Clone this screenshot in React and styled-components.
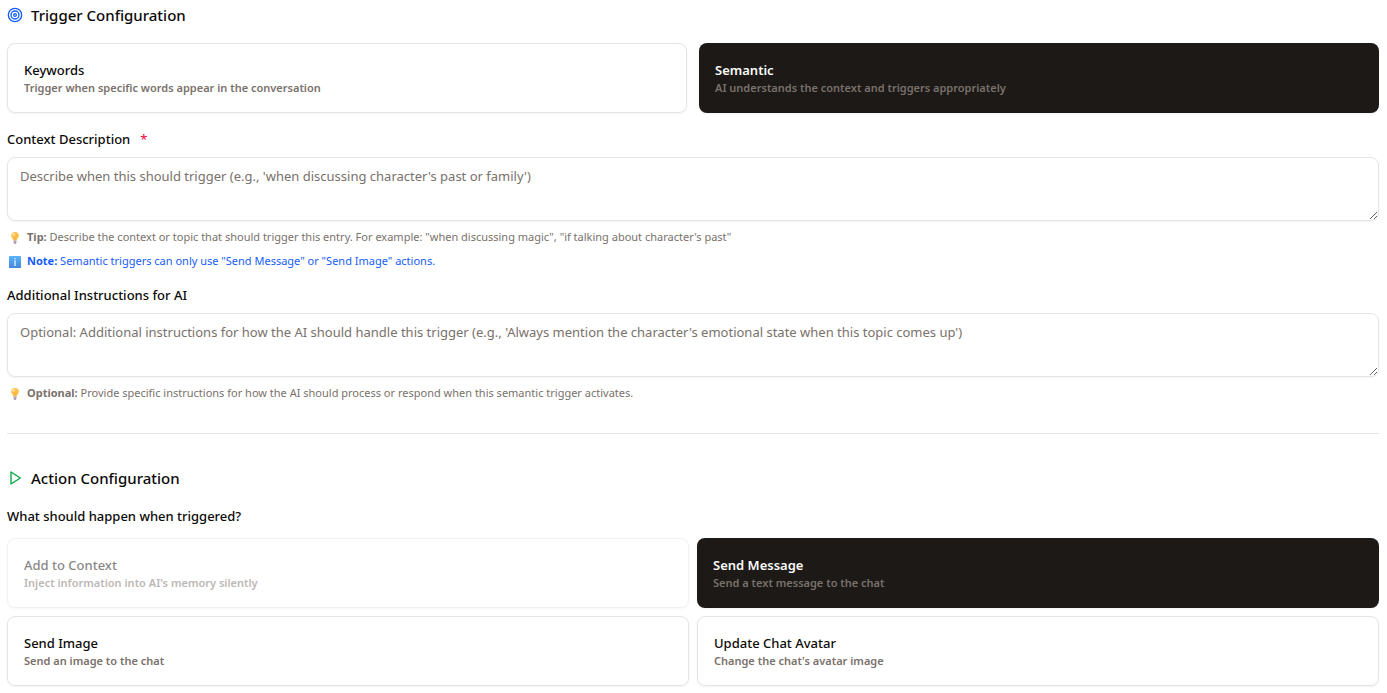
import React, { useState } from "react";
import styled, { createGlobalStyle } from "styled-components";

const GlobalStyle = createGlobalStyle`
  *, *::before, *::after { box-sizing: border-box; }
  body {
    margin: 0;
    background: #ffffff;
    color: #0c0a09;
    font-family: "Segoe UI", "Noto Sans", "Open Sans", sans-serif;
    font-size: 14px;
    line-height: 20px;
  }
`;

const Page = styled.main`
  padding: 3px 8px 7px 7px;
`;

const SectionTitle = styled.h2`
  display: flex;
  align-items: center;
  gap: 8px;
  margin: 0 0 16px;
  font-size: 15px;
  font-weight: 500;
  line-height: 24px;
`;

const TitleIcon = styled.svg`
  flex: none;
  width: 16px;
  height: 16px;
  fill: none;
  stroke: ${(p) => p.$color};
  stroke-width: 2;
  stroke-linecap: round;
  stroke-linejoin: round;
`;

const OptionGrid = styled.div`
  display: grid;
  grid-template-columns: repeat(2, minmax(0, 1fr));
  gap: ${(p) => p.$gap}px;
`;

const OptionCard = styled.button`
  display: flex;
  flex-direction: column;
  align-items: flex-start;
  justify-content: center;
  min-height: 70px;
  padding: 16px;
  border: ${(p) => (p.$active ? "none" : "1px solid #e5e5e5")};
  border-radius: 8px;
  background: ${(p) => (p.$active ? "#1c1917" : "#ffffff")};
  color: ${(p) => (p.$active ? "#fafaf9" : "#0c0a09")};
  box-shadow: 0 1px 2px rgba(0, 0, 0, 0.05);
  font-family: inherit;
  text-align: left;
  cursor: pointer;

  &:disabled {
    opacity: 0.5;
    cursor: not-allowed;
  }
`;

const OptionName = styled.span`
  font-size: 13px;
  font-weight: ${(p) => (p.$active ? 600 : 500)};
  line-height: 20px;
`;

const OptionText = styled.span`
  color: #79716b;
  font-size: 11px;
  font-weight: 600;
  line-height: 16px;
`;

const Field = styled.div`
  display: flex;
  flex-direction: column;
  gap: 8px;
  margin-top: 16px;
`;

const Label = styled.label`
  font-size: 13px;
  font-weight: 500;
  line-height: 20px;
`;

const Required = styled.span`
  margin-left: 10px;
  color: #ec003f;
  font-weight: 400;
`;

const TextArea = styled.textarea`
  display: block;
  width: 100%;
  height: 64px;
  padding: 8px 12px;
  border: 1px solid #e5e5e5;
  border-radius: 8px;
  background: #ffffff;
  box-shadow: 0 1px 2px rgba(0, 0, 0, 0.05);
  color: inherit;
  font-family: inherit;
  font-size: 13px;
  line-height: 20px;
  resize: vertical;

  &::placeholder {
    color: #79716b;
    opacity: 1;
  }
`;

const Hint = styled.p`
  display: flex;
  align-items: center;
  gap: 4px;
  margin: 0;
  color: ${(p) => (p.$note ? "#155dfc" : "#79716b")};
  font-size: 11px;
  line-height: 16px;
`;

const Divider = styled.hr`
  height: 1px;
  margin: 32px 0;
  border: 0;
  background: #e5e5e5;
`;

const Question = styled.h3`
  margin: 0 0 12px;
  font-size: 13px;
  font-weight: 500;
  line-height: 20px;
`;

const HintIcon = styled.svg`
  flex: none;
  width: 16px;
  height: 16px;
`;

function Bulb() {
  return (
    <HintIcon viewBox="0 0 16 16" aria-hidden="true">
      <path d="M8 3a3.9 3.9 0 0 0-3.9 3.8c0 1.9 1.9 2.6 2.2 4.7h3.4c.3-2.1 2.2-2.8 2.2-4.7A3.9 3.9 0 0 0 8 3z" fill="#fdc04a" />
      <path d="M7 7.6l1 1 1-1M8 8.6v2.6" fill="none" stroke="#eda03a" strokeWidth=".7" />
      <ellipse cx="6.6" cy="5.4" rx="1.2" ry="1.3" fill="#ffe7a8" />
      <path d="M6.5 11.5h3v2.3l-.7 1.2H7.2l-.7-1.2z" fill="#b3a3b8" />
    </HintIcon>
  );
}

function Info() {
  return (
    <HintIcon viewBox="0 0 16 16" aria-hidden="true">
      <defs>
        <linearGradient id="info-fill" x1="0" y1="0" x2="0" y2="1">
          <stop offset="0" stopColor="#5ab2fa" />
          <stop offset="1" stopColor="#4488dc" />
        </linearGradient>
      </defs>
      <rect x="2" y="3" width="12" height="12" rx=".6" fill="url(#info-fill)" />
      <path d="M7.4 5h1.3v1.3H7.4zM7.4 7.3h1.3V13H7.4z" fill="#e6f3ff" />
    </HintIcon>
  );
}

function Option({ name, text, active, disabled, onSelect }) {
  return (
    <OptionCard
      type="button"
      $active={active}
      aria-pressed={active}
      disabled={disabled}
      onClick={onSelect}
    >
      <OptionName $active={active}>{name}</OptionName>
      <OptionText>{text}</OptionText>
    </OptionCard>
  );
}

const triggers = [
  { name: "Keywords", text: "Trigger when specific words appear in the conversation" },
  { name: "Semantic", text: "AI understands the context and triggers appropriately" },
];

const actions = [
  { name: "Add to Context", text: "Inject information into AI's memory silently", disabled: true },
  { name: "Send Message", text: "Send a text message to the chat" },
  { name: "Send Image", text: "Send an image to the chat" },
  { name: "Update Chat Avatar", text: "Change the chat's avatar image" },
];

export default function App() {
  const [trigger, setTrigger] = useState("Semantic");
  const [action, setAction] = useState("Send Message");

  return (
    <>
      <GlobalStyle />
      <Page>
        <section>
          <SectionTitle>
            <TitleIcon viewBox="0 0 24 24" $color="#155dfc" aria-hidden="true">
              <circle cx="12" cy="12" r="10" />
              <circle cx="12" cy="12" r="6" />
              <circle cx="12" cy="12" r="2" />
            </TitleIcon>
            Trigger Configuration
          </SectionTitle>
          <OptionGrid $gap={12}>
            {triggers.map((t) => (
              <Option key={t.name} {...t} active={trigger === t.name} onSelect={() => setTrigger(t.name)} />
            ))}
          </OptionGrid>
          <Field>
            <Label htmlFor="context">
              Context Description<Required>*</Required>
            </Label>
            <TextArea
              id="context"
              required
              placeholder="Describe when this should trigger (e.g., 'when discussing character's past or family')"
            />
            <Hint>
              <Bulb />
              <span>
                <strong>Tip:</strong> Describe the context or topic that should trigger this entry. For example: "when
                discussing magic", "if talking about character's past"
              </span>
            </Hint>
            <Hint $note>
              <Info />
              <span>
                <strong>Note:</strong> Semantic triggers can only use "Send Message" or "Send Image" actions.
              </span>
            </Hint>
          </Field>
          <Field>
            <Label htmlFor="instructions">Additional Instructions for AI</Label>
            <TextArea
              id="instructions"
              placeholder="Optional: Additional instructions for how the AI should handle this trigger (e.g., 'Always mention the character's emotional state when this topic comes up')"
            />
            <Hint>
              <Bulb />
              <span>
                <strong>Optional:</strong> Provide specific instructions for how the AI should process or respond when
                this semantic trigger activates.
              </span>
            </Hint>
          </Field>
        </section>
        <Divider />
        <section>
          <SectionTitle>
            <TitleIcon viewBox="0 0 24 24" $color="#00a63e" aria-hidden="true">
              <polygon points="6 3 20 12 6 21 6 3" />
            </TitleIcon>
            Action Configuration
          </SectionTitle>
          <Question>What should happen when triggered?</Question>
          <OptionGrid $gap={8}>
            {actions.map((a) => (
              <Option key={a.name} {...a} active={action === a.name} onSelect={() => setAction(a.name)} />
            ))}
          </OptionGrid>
        </section>
      </Page>
    </>
  );
}
